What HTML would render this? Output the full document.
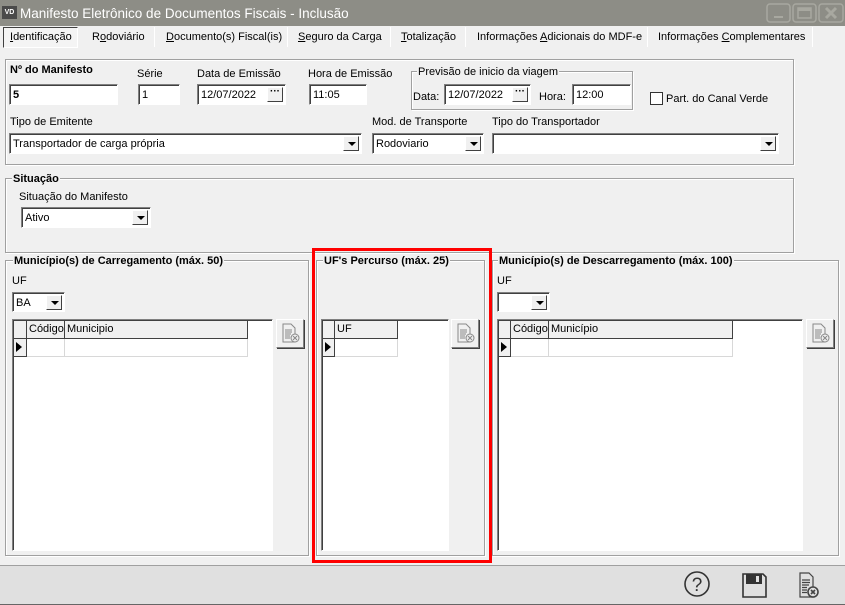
<!DOCTYPE html>
<html><head><meta charset="utf-8">
<style>
*{box-sizing:border-box;margin:0;padding:0}
body{width:845px;height:605px;background:#f0f0f0;font-family:"Liberation Sans",Tahoma,sans-serif;font-size:11px;color:#000;position:relative;overflow:hidden}
.a{position:absolute}
.t{position:absolute;white-space:nowrap;font-size:11px;line-height:14px}
.b{font-weight:bold}
.inp{position:absolute;background:#fff;border:1px solid;border-color:#808080 #fff #fff #808080;box-shadow:inset 1px 1px 0 #404040;height:21px;padding:3px 0 0 3px;white-space:nowrap;line-height:14px}
.dd{position:absolute;right:2px;top:2px;width:16px;height:15px;background:#f0f0f0;border:1px solid;border-color:#fff #404040 #404040 #fff}
.dd:after{content:"";position:absolute;left:4px;top:5px;border-left:4px solid transparent;border-right:4px solid transparent;border-top:4px solid #000}
.dots{position:absolute;right:2px;top:2px;width:16px;height:15px;background:#f0f0f0;border:1px solid;border-color:#fff #404040 #404040 #fff;font-size:10px;line-height:8px;text-align:center;font-weight:bold}
.grp{position:absolute;border:1px solid #a0a0a0;box-shadow:1px 1px 0 #fff, inset 1px 1px 0 #fff}
.leg{position:absolute;background:#f0f0f0;padding:0 1px;white-space:nowrap;line-height:14px}
.grid{position:absolute;background:#fff;border:1px solid;border-color:#808080 #fff #fff #808080;box-shadow:inset 1px 1px 0 #404040}
.hc{position:absolute;background:#f0f0f0;border-right:1px solid #404040;border-bottom:1px solid #404040;height:18px;line-height:17px;padding-left:2px;white-space:nowrap;overflow:hidden}
.rc{position:absolute;border-right:1px solid #d8d8d8;border-bottom:1px solid #d8d8d8;height:18px}
.ind{position:absolute;background:#f0f0f0;border-right:1px solid #404040;border-bottom:1px solid #404040;height:18px}
.btn{position:absolute;width:28px;height:29px;background:#f0f0f0;border:1px solid;border-color:#fff #808080 #808080 #fff;box-shadow:1px 1px 0 #404040}
.tab{position:absolute;top:30px;height:16px;line-height:14px;white-space:nowrap}
.sep{position:absolute;top:27px;width:1px;height:20px;background:#a0a0a0;border-right:1px solid #fff}
u{text-decoration:underline}
</style></head><body>
<div class="a" style="left:0;top:0;width:845px;height:26px;background:#8d8d86"></div>
<div class="a" style="left:2px;top:6px;width:15px;height:13px;background:#4a4a4a;color:#fff;font-size:7px;line-height:13px;text-align:center;font-weight:bold">VD</div>
<div class="t" style="left:20px;top:5px;font-size:13.5px;line-height:17px;color:#fff">Manifesto Eletrônico de Documentos Fiscais - Inclusão</div>
<svg class="a" style="left:766px;top:3px" width="79" height="21">
<g fill="none" stroke="#a8a8a0" stroke-width="1.5"><rect x="1" y="1" width="23" height="18" rx="3"/><rect x="27" y="1" width="23" height="18" rx="3"/><rect x="53" y="1" width="24" height="18" rx="3"/></g>
<rect x="8" y="13" width="9" height="2" fill="#a8a8a0"/>
<rect x="32" y="5" width="13" height="10" fill="none" stroke="#a8a8a0" stroke-width="1.5"/><rect x="32" y="5" width="13" height="3" fill="#a8a8a0"/>
<path d="M60 5l10 10M70 5l-10 10" stroke="#a8a8a0" stroke-width="3"/>
</svg>
<div class="a" style="left:3px;top:27px;width:75px;height:21px;border:1px solid;border-color:#404040 #fff #fff #404040;background:#f4f4f4"></div>
<div class="tab" style="left:10px"><u>I</u>dentificação</div>
<div class="tab" style="left:92px">R<u>o</u>doviário</div>
<div class="sep" style="left:154px"></div>
<div class="tab" style="left:166px"><u>D</u>ocumento(s) Fiscal(is)</div>
<div class="sep" style="left:287px"></div>
<div class="tab" style="left:298px"><u>S</u>eguro da Carga</div>
<div class="sep" style="left:390px"></div>
<div class="tab" style="left:401px"><u>T</u>otalização</div>
<div class="sep" style="left:465px"></div>
<div class="tab" style="left:477px">Informações <u>A</u>dicionais do MDF-e</div>
<div class="sep" style="left:647px"></div>
<div class="tab" style="left:658px">Informações <u>C</u>omplementares</div>
<div class="sep" style="left:812px"></div>
<div class="grp" style="left:5px;top:59px;width:789px;height:106px"></div>
<div class="t b" style="left:10px;top:63px">Nº do Manifesto</div>
<div class="inp b" style="left:9px;top:84px;width:109px">5</div>
<div class="t" style="left:137px;top:67px">Série</div>
<div class="inp" style="left:138px;top:84px;width:42px">1</div>
<div class="t" style="left:197px;top:67px">Data de Emissão</div>
<div class="inp" style="left:197px;top:84px;width:89px">12/07/2022<div class="dots">···</div></div>
<div class="t" style="left:308px;top:67px">Hora de Emissão</div>
<div class="inp" style="left:309px;top:84px;width:58px">11:05</div>
<div class="grp" style="left:411px;top:71px;width:222px;height:39px"></div>
<div class="leg" style="left:417px;top:65px">Previsão de inicio da viagem</div>
<div class="t" style="left:413px;top:90px">Data:</div>
<div class="inp" style="left:444px;top:84px;width:87px">12/07/2022<div class="dots">···</div></div>
<div class="t" style="left:539px;top:90px">Hora:</div>
<div class="inp" style="left:572px;top:84px;width:59px">12:00</div>
<div class="a" style="left:650px;top:92px;width:13px;height:13px;background:#fff;border:1px solid #333"></div>
<div class="t" style="left:666px;top:92px">Part. do Canal Verde</div>
<div class="t" style="left:10px;top:115px">Tipo de Emitente</div>
<div class="inp" style="left:9px;top:133px;width:353px">Transportador de carga própria<div class="dd"></div></div>
<div class="t" style="left:372px;top:115px">Mod. de Transporte</div>
<div class="inp" style="left:372px;top:133px;width:112px">Rodoviario<div class="dd"></div></div>
<div class="t" style="left:492px;top:115px">Tipo do Transportador</div>
<div class="inp" style="left:492px;top:133px;width:287px"><div class="dd"></div></div>
<div class="grp" style="left:5px;top:178px;width:789px;height:75px"></div>
<div class="leg b" style="left:12px;top:172px">Situação</div>
<div class="t" style="left:19px;top:190px">Situação do Manifesto</div>
<div class="inp" style="left:21px;top:207px;width:130px">Ativo<div class="dd"></div></div>
<div class="grp" style="left:5px;top:260px;width:304px;height:296px"></div>
<div class="leg b" style="left:13px;top:254px">Município(s) de Carregamento (máx. 50)</div>
<div class="t" style="left:12px;top:274px">UF</div>
<div class="inp" style="left:12px;top:292px;width:53px;height:20px">BA<div class="dd"></div></div>
<div class="grid" style="left:12px;top:319px;width:261px;height:232px">
<div class="ind" style="left:1px;top:1px;width:13px"></div>
<div class="hc" style="left:14px;top:1px;width:38px">Código</div>
<div class="hc" style="left:52px;top:1px;width:183px">Municipio</div>
<div class="ind" style="left:1px;top:19px;width:13px"></div>
<div class="rc" style="left:14px;top:19px;width:38px"></div>
<div class="rc" style="left:52px;top:19px;width:183px"></div>
</div>
<div class="grp" style="left:316px;top:260px;width:169px;height:296px"></div>
<div class="leg b" style="left:323px;top:254px">UF's Percurso (máx. 25)</div>
<div class="grid" style="left:321px;top:319px;width:128px;height:232px">
<div class="ind" style="left:1px;top:1px;width:12px"></div>
<div class="hc" style="left:13px;top:1px;width:63px">UF</div>
<div class="ind" style="left:1px;top:19px;width:12px"></div>
<div class="rc" style="left:13px;top:19px;width:63px"></div>
</div>
<div class="grp" style="left:492px;top:260px;width:347px;height:296px"></div>
<div class="leg b" style="left:498px;top:254px">Município(s) de Descarregamento (máx. 100)</div>
<div class="t" style="left:497px;top:274px">UF</div>
<div class="inp" style="left:497px;top:292px;width:53px;height:20px"><div class="dd"></div></div>
<div class="grid" style="left:497px;top:319px;width:306px;height:232px">
<div class="ind" style="left:1px;top:1px;width:12px"></div>
<div class="hc" style="left:13px;top:1px;width:38px">Código</div>
<div class="hc" style="left:51px;top:1px;width:184px">Município</div>
<div class="ind" style="left:1px;top:19px;width:12px"></div>
<div class="rc" style="left:13px;top:19px;width:38px"></div>
<div class="rc" style="left:51px;top:19px;width:184px"></div>
</div>
<svg class="a" style="left:15px;top:341px" width="8" height="12"><path d="M1 1l6 5-6 5z" fill="#000"/></svg>
<svg class="a" style="left:324px;top:341px" width="8" height="12"><path d="M1 1l6 5-6 5z" fill="#000"/></svg>
<svg class="a" style="left:500px;top:341px" width="8" height="12"><path d="M1 1l6 5-6 5z" fill="#000"/></svg>
<div class="btn" style="left:276px;top:319px"><svg width="26" height="27"><g fill="none" stroke="#888" stroke-width="1"><path d="M6 4h8l4 4v14H6z"/><path d="M8 10h7M8 12h7M8 14h6M8 16h5M8 18h5"/><circle cx="18" cy="18" r="4" fill="#eee"/><path d="M16 16l4 4M20 16l-4 4"/></g></svg></div>
<div class="btn" style="left:451px;top:319px"><svg width="26" height="27"><g fill="none" stroke="#888" stroke-width="1"><path d="M6 4h8l4 4v14H6z"/><path d="M8 10h7M8 12h7M8 14h6M8 16h5M8 18h5"/><circle cx="18" cy="18" r="4" fill="#eee"/><path d="M16 16l4 4M20 16l-4 4"/></g></svg></div>
<div class="btn" style="left:806px;top:319px"><svg width="26" height="27"><g fill="none" stroke="#888" stroke-width="1"><path d="M6 4h8l4 4v14H6z"/><path d="M8 10h7M8 12h7M8 14h6M8 16h5M8 18h5"/><circle cx="18" cy="18" r="4" fill="#eee"/><path d="M16 16l4 4M20 16l-4 4"/></g></svg></div>
<div class="a" style="left:312px;top:248px;width:180px;height:315px;border:3px solid #f00"></div>
<div class="a" style="left:0;top:565px;width:845px;height:40px;background:#e0e0e0;border-top:1px solid #a0a0a0;border-bottom:1px solid #666"></div>
<svg class="a" style="left:680px;top:568px" width="160" height="34">
<circle cx="17" cy="16" r="12" fill="none" stroke="#333" stroke-width="1.6"/>
<text x="17" y="23" text-anchor="middle" font-family="Liberation Sans" font-size="19" fill="#333">?</text>
<path d="M63 6h20l3 3v20H63z" fill="none" stroke="#333" stroke-width="1.6"/>
<rect x="66" y="6" width="16" height="10" fill="#333"/><rect x="76" y="8" width="3" height="6" fill="#e0e0e0"/>
<g fill="none" stroke="#444" stroke-width="1.2"><path d="M120 5h9l4 4v20h-13z"/><path d="M122 12h8M122 14.5h8M122 17h7M122 19.5h5M122 22h5M122 24.5h5"/><circle cx="133" cy="24" r="5" fill="#e0e0e0" stroke-width="1.6"/><path d="M131 22l4 4M135 22l-4 4" stroke-width="1.6"/></g>
</svg>
</body></html>
